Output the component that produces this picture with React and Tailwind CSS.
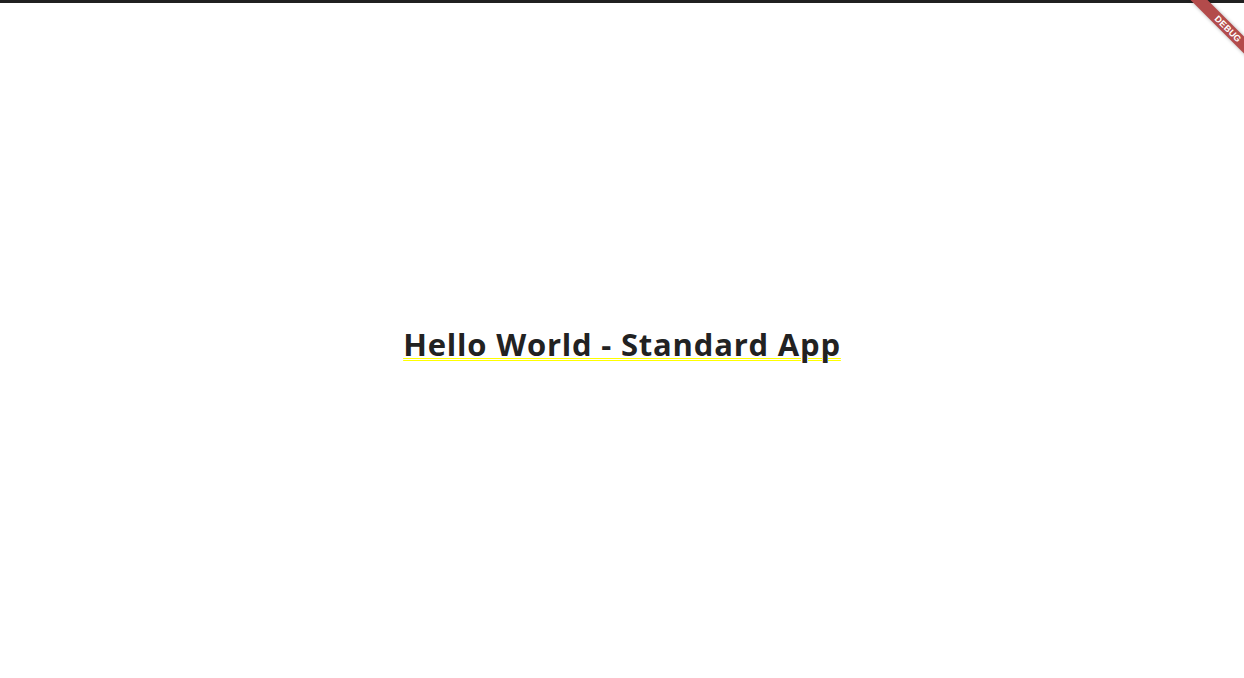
export default function App() {
  return (
    <div className="relative w-[1244px] h-[678px] bg-white overflow-hidden flex flex-col">
      <div className="h-[3px] bg-[#202020] shrink-0" />
      <div className="flex-1 flex items-center justify-center pt-[7px]">
        <span
          className="text-[31px] font-bold text-[#222222] leading-[40px] tracking-[0.8px] underline decoration-double decoration-[#ffff00] decoration-[1px] underline-offset-[2px]"
          style={{ fontFamily: '"Open Sans", "Noto Sans", sans-serif' }}
        >
          Hello World - Standard App
        </span>
      </div>
      <div className="absolute left-[1178px] top-[23px] w-[100px] h-[12px] rotate-45 bg-[#b34b4b] shadow-[0_0_4px_rgba(0,0,0,0.3)] flex items-center justify-center">
        <span
          className="text-white font-bold text-[9px] leading-none tracking-[0.2px]"
          style={{ fontFamily: '"Liberation Sans", sans-serif' }}
        >
          DEBUG
        </span>
      </div>
    </div>
  );
}
